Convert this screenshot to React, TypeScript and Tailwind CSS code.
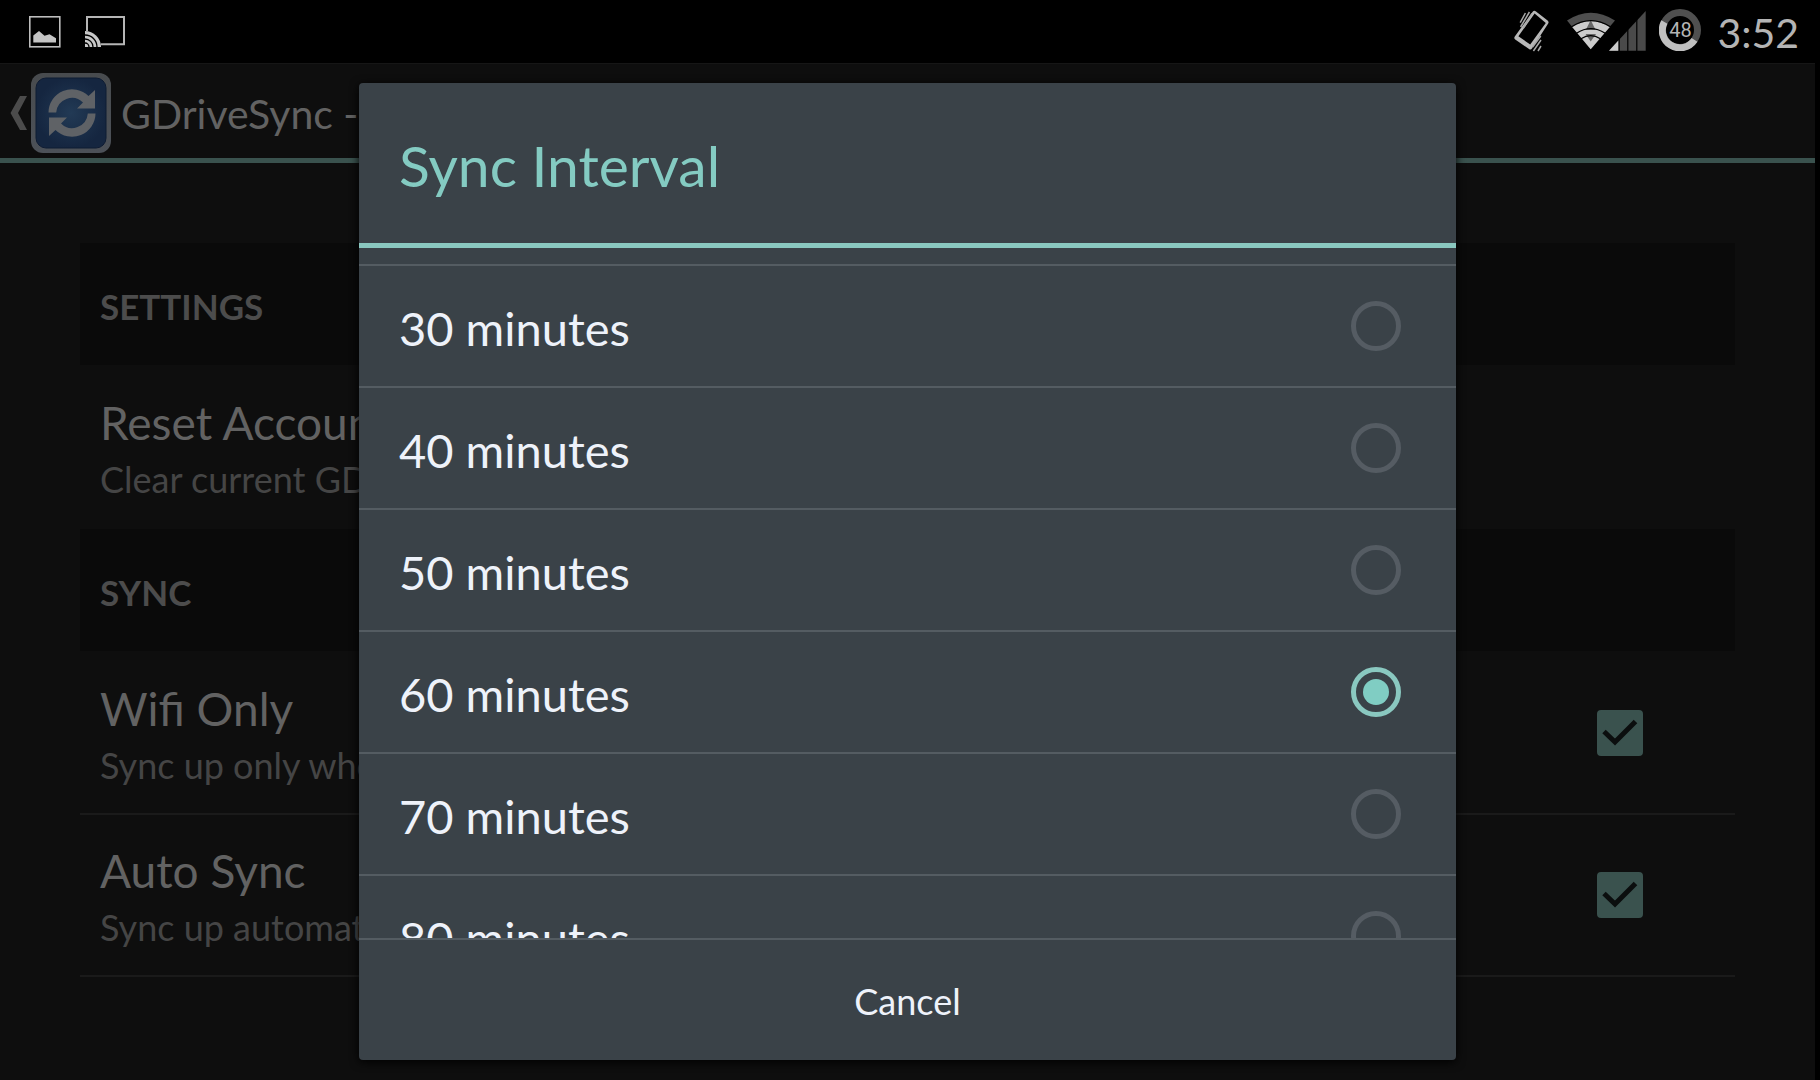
import React, { useState } from "react";

function PictureIcon() {
  return (
    <svg width="32" height="32" viewBox="0 0 32 32" aria-hidden="true">
      <rect x="0.8" y="0.8" width="30" height="30" fill="none" stroke="#bdbdbd" strokeWidth="1.6" />
      <path d="M4.3 26.5V19.5L10 15L15.5 19.8L20.5 18.3L27 22.3V26.5Z" fill="#c4c4c4" />
    </svg>
  );
}

function CastIcon() {
  return (
    <svg width="40" height="32" viewBox="0 0 40 32" aria-hidden="true">
      <path d="M2 15V1H39V28.3H16" fill="none" stroke="#b5b5b5" strokeWidth="2" />
      <path d="M0 15A16 16 0 0 1 16 31H0Z" fill="#c8c8c8" />
      <g fill="none" stroke="#000" strokeWidth="1.3">
        <path d="M0 19A12 12 0 0 1 12 31" />
        <path d="M0 23A8 8 0 0 1 8 31" />
        <path d="M0 27A4 4 0 0 1 4 31" />
      </g>
    </svg>
  );
}

function VibrateIcon() {
  return (
    <svg width="36" height="42" viewBox="0 0 36 42" aria-hidden="true">
      <path
        fillRule="evenodd"
        fill="#b8b8b8"
        d="M18.5 2Q20 0 22 1.4L33.6 10.4Q35.2 11.8 34.2 13.4L18 38.6Q16.8 40.2 15 39L1.2 29.4Q-0.4 28.2 0.8 26.6ZM20.6 3.6L4.4 26.2L16.2 34.6L31.8 13Z"
      />
      <path
        d="M6.2 12.6L11.4 3M6.6 17L15.4 2M9.4 18L18 3.4M18.6 37L26.8 26M19.4 41L27 30M24 41L27 36"
        stroke="#a8a8a8"
        strokeWidth="1.5"
        fill="none"
      />
    </svg>
  );
}

function NetworkIcon() {
  return (
    <svg width="80" height="42" viewBox="0 0 80 42" aria-hidden="true">
      <path d="M0 10.5Q23.7 -5 48 10.5L23.7 39.3Z" fill="#4e4e4e" />
      <path d="M5.2 17Q23.7 5 42.8 17L23.7 39.3Z" fill="#cccccc" />
      <path d="M23.7 10L18.8 20H28.6Z" fill="#666666" />
      <path d="M18.6 24H29L23.7 31.5Z" fill="#666666" />
      <g fill="none" stroke="#000" strokeWidth="1.3">
        <path d="M4.6 16.8Q23.7 4.6 43.4 16.8" />
        <path d="M9.5 23.2Q23.7 14 38.2 23.2" />
        <path d="M14 28.8Q23.7 22.6 33.4 28.8" />
      </g>
      <path d="M42 40.8L78.7 1V40.8Z" fill="#4a4a4a" />
      <path d="M42 40.8L51.4 30.6V40.8Z" fill="#cccccc" />
      <path d="M52.2 26V41M60.8 18V41M69.8 8V41" stroke="#000" strokeWidth="1.2" />
    </svg>
  );
}

function BatteryRing() {
  return (
    <div className="grid size-[42px] place-items-center">
      <svg className="col-start-1 row-start-1" width="42" height="42" viewBox="0 0 42 42" aria-hidden="true">
        <circle cx="21" cy="21" r="17.5" fill="none" stroke="#505050" strokeWidth="7" />
        <path d="M35.5 30.8A17.5 17.5 0 0 1 5.4 13" fill="none" stroke="#c0c0c0" strokeWidth="7" />
      </svg>
      <span className="col-start-1 row-start-1 font-[Roboto,sans-serif] text-[20px] leading-5 text-[#b4b4b4]">48</span>
    </div>
  );
}

function AppIcon() {
  const arrow = "M17.5 39.5A23.5 23.5 0 0 1 57.5 23L64 17V35.5H46L52 29.5A15.8 15.8 0 0 0 25.2 39.5Z";
  return (
    <svg width="80" height="80" viewBox="0 0 80 80" aria-hidden="true">
      <defs>
        <linearGradient id="frame" x1="0" y1="0" x2="0" y2="1">
          <stop offset="0" stopColor="#484b4e" />
          <stop offset="1" stopColor="#4c5158" />
        </linearGradient>
        <radialGradient id="face">
          <stop offset="0" stopColor="#223a55" />
          <stop offset="1" stopColor="#152640" />
        </radialGradient>
      </defs>
      <rect width="80" height="80" rx="12" fill="url(#frame)" />
      <rect x="5" y="5" width="70" height="70" rx="10" fill="url(#face)" stroke="#0f1c33" strokeWidth="1" />
      <g fill="#5f6266">
        <path d={arrow} />
        <path d={arrow} transform="rotate(180 41 40)" />
      </g>
    </svg>
  );
}

function StatusBar() {
  return (
    <header className="flex h-[63px] shrink-0 items-start justify-between bg-black pl-[29px] pr-[21px]">
      <div className="flex gap-6 pt-4">
        <PictureIcon />
        <CastIcon />
      </div>
      <div className="flex pt-[9px]">
        <div className="flex gap-[17px] pt-px">
          <VibrateIcon />
          <NetworkIcon />
        </div>
        <div className="ml-3 flex gap-4">
          <BatteryRing />
          <span className="text-[41px] leading-[48px] text-[#b4b4b4]">3:52</span>
        </div>
      </div>
    </header>
  );
}

function ActionBar() {
  return (
    <div className="flex h-[100px] shrink-0 items-center border-b-5 border-[#3a524e] border-t border-t-[#161616] pl-2.5 pt-1">
      <button type="button" aria-label="Navigate up" className="flex items-center gap-[3px]">
        <svg width="18" height="36" viewBox="0 0 18 36" aria-hidden="true">
          <path d="M10 1H17L8 18L17 35H10L0.5 18Z" fill="#4b4b4b" />
        </svg>
        <AppIcon />
      </button>
      <h1 className="ml-2.5 whitespace-nowrap pt-0.5 text-[41px] leading-[48px] text-[#626262]">GDriveSync - Settings</h1>
    </div>
  );
}

function SectionHeader({ children }: { children: React.ReactNode }) {
  return (
    <h2 className="flex h-[124px] items-center border-b-2 border-[#0e0e0e] bg-[#0a0a0a] px-5 pt-1 text-[35px] font-bold leading-[44px] text-[#4c4c4c]">
      {children}
    </h2>
  );
}

function RowText({ title, summary }: { title: string; summary: string }) {
  return (
    <span className="block min-w-0 flex-1 self-start whitespace-nowrap pt-7">
      <span className="block text-[46px] leading-[56px] text-[#626262]">{title}</span>
      <span className="mt-1.5 block text-[36px] leading-[44px] text-[#454545]">{summary}</span>
    </span>
  );
}

function CheckRow({ title, summary }: { title: string; summary: string }) {
  return (
    <label className="flex h-[162px] items-center border-b-2 border-[#1a1a1a] pl-5 pr-[92px]">
      <RowText title={title} summary={summary} />
      <span className="grid size-[46px] place-items-center">
        <input
          type="checkbox"
          defaultChecked
          className="peer col-start-1 row-start-1 size-[46px] appearance-none rounded border-4 border-[#3a524e] checked:bg-[#3a524e]"
        />
        <svg
          className="pointer-events-none invisible col-start-1 row-start-1 peer-checked:visible"
          width="46"
          height="46"
          viewBox="0 0 46 46"
          aria-hidden="true"
        >
          <path d="M7 21.5L18 32L38.5 11.5" fill="none" stroke="#0b0e0e" strokeWidth="5" />
        </svg>
      </span>
    </label>
  );
}

const intervals = [30, 40, 50, 60, 70, 80];

function IntervalDialog() {
  const [selected, setSelected] = useState(60);
  return (
    <div className="absolute inset-0 flex justify-center pb-5 pr-[5px] pt-[83px]">
      <section
        role="dialog"
        aria-labelledby="dialog-title"
        className="flex h-full w-full max-w-[1097px] flex-col overflow-hidden rounded bg-[#3a4248] shadow-[0_2px_10px_#000]"
      >
        <h2
          id="dialog-title"
          className="flex h-[165px] shrink-0 items-center border-b-5 border-[#8ac8c0] px-10 pt-1 text-[57px] leading-[64px] text-[#84cbc2]"
        >
          Sync Interval
        </h2>
        <div role="radiogroup" aria-labelledby="dialog-title" className="min-h-0 flex-1 overflow-y-auto pt-4 [scrollbar-width:none]">
          {intervals.map((m) => (
            <label
              key={m}
              className="flex h-[122px] items-center justify-between border-t-2 border-[#545c62] pl-10 pr-[55px] text-[47px] leading-[56px] text-[#eef2fa]"
            >
              <span className="pt-1">{m} minutes</span>
              <input
                type="radio"
                name="interval"
                checked={selected === m}
                onChange={() => setSelected(m)}
                className="grid size-[50px] appearance-none place-items-center rounded-full border-5 border-[#555c63] before:size-[26px] before:rounded-full checked:border-[#8ac8c0] checked:before:bg-[#80cdc3]"
              />
            </label>
          ))}
        </div>
        <button
          type="button"
          className="h-[122px] shrink-0 border-t-2 border-[#545c62] pt-0.5 text-[36px] leading-[44px] text-[#eef2fa]"
        >
          Cancel
        </button>
      </section>
    </div>
  );
}

export default function App() {
  return (
    <div className="relative flex h-screen flex-col overflow-hidden bg-black font-[Lato,sans-serif]">
      <StatusBar />
      <div className="mr-[5px] flex min-h-0 flex-1 flex-col bg-[#0e0e0e]">
        <ActionBar />
        <main className="px-20 pt-20">
          <SectionHeader>SETTINGS</SectionHeader>
          <button type="button" className="flex h-[162px] w-full pl-5 text-left">
            <RowText title="Reset Account" summary="Clear current GDrive account" />
          </button>
          <SectionHeader>SYNC</SectionHeader>
          <CheckRow title="Wifi Only" summary="Sync up only when wifi is connected" />
          <CheckRow title="Auto Sync" summary="Sync up automatically" />
        </main>
      </div>
      <IntervalDialog />
    </div>
  );
}
